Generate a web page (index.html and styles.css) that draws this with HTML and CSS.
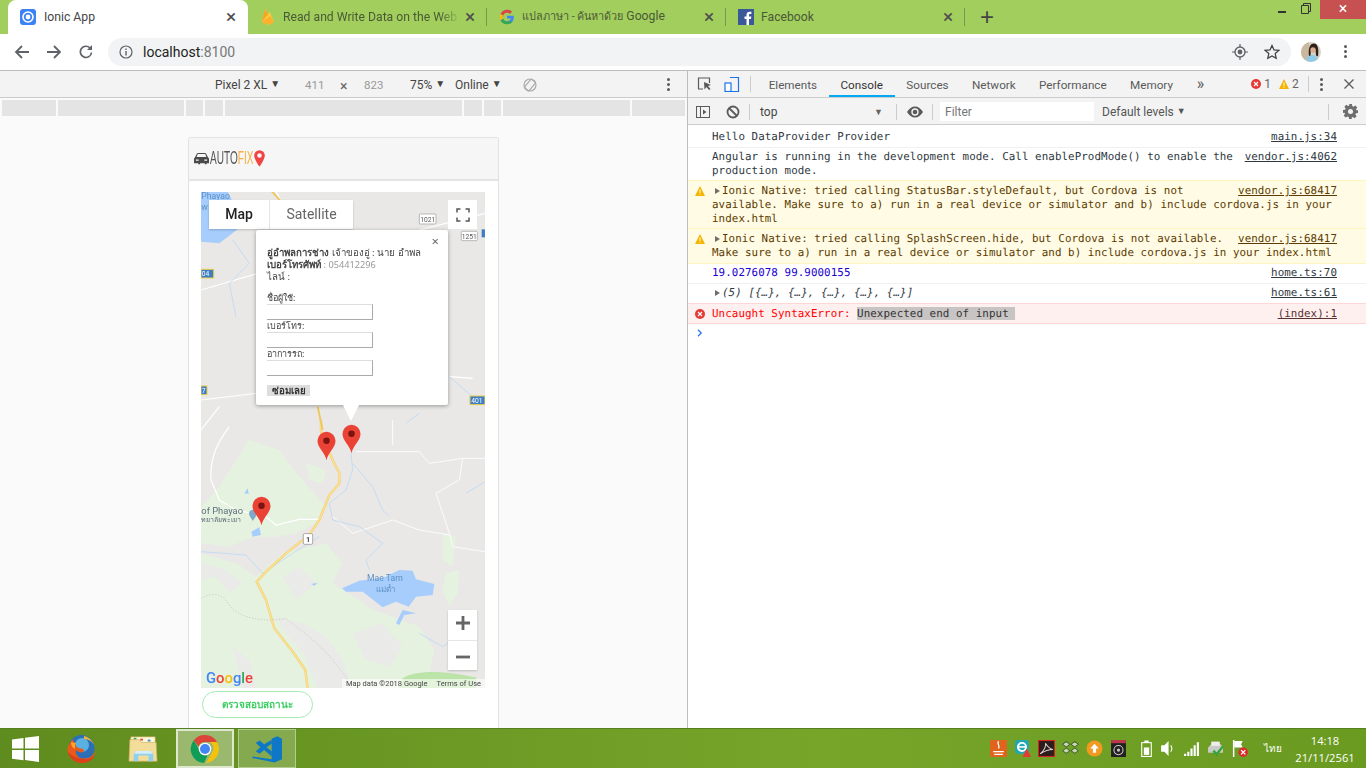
FILE: index.html
```html
<!DOCTYPE html>
<html lang="en">
<head>
  <meta charset="UTF-8">
  <title>Ionic App</title>
  <link rel="stylesheet" href="styles.css">
</head>
<body>

  <!-- chrome tabs -->
  <div class="tabstrip">
    <div class="tab active">
      <svg class="favicon" viewBox="0 0 16 16"><rect width="16" height="16" rx="3" fill="#3b82f6"/><circle cx="8" cy="8" r="5" fill="none" stroke="#fff" stroke-width="1.6"/><circle cx="8" cy="8" r="2.4" fill="#fff"/></svg>
      <span class="tab-title">Ionic App</span>
      <span class="tab-close">×</span>
    </div>
    <div class="tab">
      <svg class="favicon" viewBox="0 0 16 16"><path d="M2 13 4.800 0 8 5.500 9.800 2.800 14 13 8 16z" fill="#fcca3f"/><path d="M2 13 4.800 0 8 5.500z" fill="#f6a623"/><path d="M2 13 10.500 7 14 13 8 16z" fill="#fbb02e"/></svg>
      <span class="tab-title fade">Read and Write Data on the Web</span>
      <span class="tab-close">×</span>
    </div>
    <div class="tab">
      <svg class="favicon" viewBox="0 0 16 16"><path d="M14.6 6.7H8v2.800h3.800c-.5 1.800-2 2.900-3.800 2.900a4.400 4.400 0 0 1 0-8.800c1.100 0 2.100.4 2.900 1.100l2-2A7.200 7.200 0 0 0 8 .8a7.200 7.200 0 1 0 0 14.400c4 0 6.800-2.800 6.800-6.900 0-.6-.1-1.100-.2-1.600z" fill="#4285f4"/><path d="M1.600 4.700 4 6.500A4.400 4.400 0 0 1 8 3.600c1.100 0 2.100.4 2.900 1.100l2-2A7.200 7.200 0 0 0 1.600 4.700z" fill="#ea4335"/><path d="M1.600 11.400A7.200 7.200 0 0 0 8 15.200c1.900 0 3.600-.6 4.900-1.800l-2.300-1.800c-.7.500-1.600.8-2.600.8A4.400 4.400 0 0 1 4 9.500z" fill="#34a853"/><path d="M1.600 4.700a7.200 7.200 0 0 0 0 6.700L4 9.500a4.400 4.400 0 0 1 0-3z" fill="#fbbc05"/></svg>
      <span class="tab-title"><span class="tab-th">แปลภาษา - ค้นหาด้วย</span> Google</span>
      <span class="tab-close">×</span>
    </div>
    <div class="tab">
      <svg class="favicon" viewBox="0 0 16 16"><rect width="16" height="16" fill="#3b5998"/><path d="M11 16v-6h2l.3-2.400H11V6.100c0-.7.2-1.200 1.200-1.200h1.200V2.800c-.2 0-1-.1-1.800-.1-1.800 0-3.100 1.100-3.100 3.200v1.700h-2V10h2v6z" fill="#fff"/></svg>
      <span class="tab-title">Facebook</span>
      <span class="tab-close">×</span>
    </div>
    <span class="new-tab">+</span>
    <div class="window-btns">
      <svg class="win-btn" viewBox="0 0 22 19"><rect x="6" y="11" width="8" height="2" fill="#333"/></svg>
      <svg class="win-btn" viewBox="0 0 22 19"><path d="M7.500 5.500h7v8h-7zM9.500 5.500v-2h7v8h-2" fill="none" stroke="#333"/></svg>
      <span class="win-close">×</span>
    </div>
  </div>

  <!-- address bar -->
  <div class="toolbar">
    <svg class="nav-icon" viewBox="0 0 16 16"><path d="M15 8H2M8 2 2 8l6 6" fill="none" stroke="#5f6368" stroke-width="1.8"/></svg>
    <svg class="nav-icon" viewBox="0 0 16 16"><path d="M1 8h13M8 2l6 6-6 6" fill="none" stroke="#5f6368" stroke-width="1.8"/></svg>
    <svg class="nav-icon" viewBox="0 0 16 16"><path d="M13.500 8.500A5.600 5.600 0 1 1 12 4" fill="none" stroke="#5f6368" stroke-width="1.7"/><path d="M14 1v5H9z" fill="#5f6368"/></svg>
    <div class="omnibox">
      <svg class="omni-info" viewBox="0 0 14 14"><circle cx="7" cy="7" r="6" fill="none" stroke="#5f6368" stroke-width="1.2"/><rect x="6.300" y="6" width="1.400" height="4.500" fill="#5f6368"/><rect x="6.300" y="3.500" width="1.400" height="1.500" fill="#5f6368"/></svg>
      <span class="url">localhost<span class="url-port">:8100</span></span>
      <svg class="omni-action" viewBox="0 0 16 16"><circle cx="8" cy="8" r="5" fill="none" stroke="#5f6368" stroke-width="1.4"/><circle cx="8" cy="8" r="2.400" fill="#5f6368"/><path d="M8 0v3M8 13v3M0 8h3M13 8h3" stroke="#5f6368" stroke-width="1.2"/></svg>
      <svg class="omni-action" viewBox="0 0 16 16"><path d="m8 1.500 2 4.400 4.800.5-3.600 3.200 1 4.700L8 11.900l-4.200 2.400 1-4.700L1.200 6.400 6 5.900z" fill="none" stroke="#444" stroke-width="1.3"/></svg>
    </div>
    <svg class="avatar" viewBox="0 0 20 20"><clipPath id="av"><circle cx="10" cy="10" r="10"/></clipPath><g clip-path="url(#av)"><rect width="20" height="20" fill="#d8d2c4"/><rect width="8" height="20" fill="#c9b8a0"/><path d="M5 20c0-5 2-7 6-7s6 2 6 7z" fill="#8fcbe6"/><path d="M8 14C7 6 9 1.500 13 1.500c4 0 5 6 4 13l-2-1-.5-6H10l-.5 6z" fill="#2f2119"/><circle cx="12" cy="8" r="2.700" fill="#dcae90"/></g></svg>
    <span class="dots"><i></i><i></i><i></i></span>
  </div>

  <div class="workspace">
    <!-- device emulation side -->
    <div class="emulator">
      <div class="device-bar">
        <span class="dev-model">Pixel 2 XL <b>▼</b></span>
        <span class="dev-size">411</span>
        <span class="dev-x">×</span>
        <span class="dev-size">823</span>
        <span class="dev-zoom">75% <b>▼</b></span>
        <span class="dev-net">Online <b>▼</b></span>
        <svg class="dev-rotate" viewBox="0 0 14 14"><circle cx="7" cy="7" r="6" fill="none" stroke="#aaa" stroke-width="1.2"/><rect x="4" y="1.500" width="6" height="11" rx="1" transform="rotate(40 7 7)" fill="none" stroke="#aaa" stroke-width="1.2"/></svg>
        <span class="dots dots-dev"><i></i><i></i><i></i></span>
      </div>
      <div class="media-bar">
        <i></i><i></i><i></i><i></i><i></i><i></i><i></i><i></i><i></i>
      </div>
      <div class="viewport">
        <div class="phone">
          <div class="app-header">
            <svg class="logo-car" viewBox="0 0 16 12"><path d="M1 5 3 1C3.300.4 3.800 0 4.500 0h7c.7 0 1.200.4 1.500 1l2 4c.6.300 1 .8 1 1.500V11h-2.500v1h-2v-1h-5v1h-2v-1H0V6.500C0 5.800.4 5.300 1 5zm1.800-.5h10.400L12 1.300H4zM2 7v1.500h3V7zm9 0v1.500h3V7z" fill="#4a4a4a" fill-rule="evenodd"/></svg>
            <span class="logo-text">AUTO<span class="logo-fix">FIX</span></span>
            <svg class="logo-pin" viewBox="0 0 12 18"><path d="M6 0a5.800 5.800 0 0 0-5.800 5.800C.2 10 6 18 6 18s5.800-8 5.800-12.200A5.800 5.800 0 0 0 6 0zm0 8.300a2.500 2.500 0 1 1 0-5 2.500 2.500 0 0 1 0 5z" fill="#ef4444"/></svg>
          </div>
          <div class="app-content">
            <div class="map">
              <svg class="map-art" viewBox="0 0 284 496">
                <rect width="284" height="496" fill="#e9e8e6"/>
                <!-- lower half, drawn on a 3x grid -->
                <g transform="translate(-15 228) scale(.3333)">
                  <path d="M45 400 150 430 210 470 290 400 420 370 470 430 440 490 520 540 560 570 620 590 700 620 745 690 730 760 640 805H45z" fill="#e5f2e0"/>
                  <path d="M100 200 190 60 280 90 340 170 420 260 390 310 330 340 270 350 200 350 130 380 45 370V260z" fill="#e5f2e0"/>
                  <path d="M360 130 420 150 410 190 370 180zM770 340 810 350 800 440 770 420zM780 460 820 450 815 520 790 560 770 510z" fill="#e5f2e0"/>
                  <path d="M45 430 110 445 170 490 130 520 90 470 45 480zM290 470 340 440 390 490 330 540zM270 590 350 610 420 650 470 720 500 805H395L350 700 300 640zM500 640 590 610 650 680 610 740 540 720zM140 680 190 720 210 805H170z" fill="#eaeae8"/>
                  <path d="M650 775C690 750 760 750 870 772V805H640z" fill="#bce3a8"/>
                  <path d="M75 180C70 110 100 60 130 20M75 180 100 240 150 270 240 290 270 315 340 298H400" fill="none" stroke="#fff" stroke-width="3.5"/>
                  <path d="M510 95H700L730 130 830 115H897M620 0V75M830 115 820 180 750 220 790 340 800 380 897 395M440 290 500 340 620 300 700 330 790 345" fill="none" stroke="#fff" stroke-width="2.5"/>
                  <path d="M495 100 500 150 480 210 430 250 440 300 520 320 590 370 540 420 550 450M500 130 560 200 590 270 610 290M45 395 180 405 230 460 320 400 400 350M700 640 770 680 800 660M840 220 897 185" fill="none" stroke="#bdd8f7" stroke-width="2.5"/>
                  <path d="M45 535C80 515 110 520 130 555 150 590 230 610 300 595 340 630 380 650 440 720 470 760 490 780 495 805" fill="none" stroke="#aeb3a4" stroke-width="1.5" stroke-dasharray="4 5"/>
                  <path d="M468 505 520 482 590 474 640 450 680 452 690 478 745 492 740 525 690 530 668 560 630 545 590 562 562 540 530 515 480 515z" fill="#a6cdfb"/>
                  <path d="M630 610 650 570 690 580 655 585 640 615zM196 335 220 322 225 345 200 350zM175 220 185 205 188 222zM375 492 395 488 385 497z" fill="#a6cdfb"/>
                  <path d="M405 0V35L440 120 460 160V190L430 225 400 300 370 345 300 400 240 455 212 485 240 540 265 625 320 695 358 750 365 805" fill="none" stroke="#f0c860" stroke-width="7"/>
                  <path d="M405 0V35L440 120 460 160V190L430 225 400 300 370 345 300 400 240 455 212 485 240 540 265 625 320 695 358 750 365 805" fill="none" stroke="#fde293" stroke-width="4.5"/>
                  <rect x="352" y="341" width="28" height="32" rx="4" fill="#fff" stroke="#888" stroke-width="2"/>
                  <text x="366" y="365" class="map-num-big" text-anchor="middle">1</text>
                  <text x="46" y="282" class="map-label">of Phayao</text>
                  <text x="46" y="306" class="map-label-th">ทยาลัยพะเยา</text>
                  <text x="543" y="483" class="map-water">Mae Tam</text>
                  <text x="570" y="515" class="map-water-th">แม่ต๋ำ</text>
                  <path d="M190 275c8-8 22-8 22 6 0 8-8 14-12 22-4-10-14-18-10-28z" fill="#7fa8c9"/>
                </g>
                <!-- upper half -->
                <g transform="translate(-15 -62) scale(.3333)">
                  <path d="M45 185H125L150 235 115 260 165 290 100 340 45 335z" fill="#a6cdfb"/>
                  <path d="M45 480 320 400M45 810 380 770M700 300 897 250M790 740 860 745M100 830 45 900M270 185 300 240" fill="none" stroke="#fff" stroke-width="3.5"/>
                  <path d="M140 330 190 400 130 460 150 560M660 880 700 850M790 740 860 800" fill="none" stroke="#bdd8f7" stroke-width="2.5"/>
                  <path d="M258 185 283 212" stroke="#f0c860" stroke-width="6"/>
                  <path d="M395 830 410 900" stroke="#f0c860" stroke-width="6"/>
                  <text x="46" y="208" class="map-water">Phayao</text>
                  <text x="46" y="240" class="map-water">w</text>
                  <rect x="700" y="252" width="50" height="30" rx="3" fill="#fff" stroke="#999" stroke-width="2"/>
                  <text x="725" y="275" class="map-num" text-anchor="middle">1021</text>
                  <rect x="826" y="304" width="48" height="28" rx="3" fill="#fff" stroke="#999" stroke-width="2"/>
                  <text x="850" y="326" class="map-num" text-anchor="middle">1251</text>
                  <rect x="45" y="418" width="38" height="26" fill="#3f7fc1" stroke="#e8cf4e" stroke-width="3"/>
                  <text x="47" y="438" class="map-shield">04</text>
                  <rect x="45" y="768" width="18" height="26" fill="#3f7fc1" stroke="#e8cf4e" stroke-width="3"/>
                  <text x="47" y="788" class="map-shield">7</text>
                  <rect x="852" y="798" width="45" height="26" fill="#3f7fc1" stroke="#e8cf4e" stroke-width="3"/>
                  <text x="856" y="818" class="map-shield">401</text>
                  <rect x="887" y="298" width="10" height="24" fill="#3f7fc1"/>
                </g>
              </svg>

              <svg class="marker marker-a" viewBox="0 0 20 30"><path d="M10 30C8.500 22 .5 17 .5 9.500a9.500 9.500 0 0 1 19 0C19.500 17 11.500 22 10 30z" fill="#ea4335"/><circle cx="10" cy="9.500" r="3.400" fill="#7b1410"/></svg>
              <svg class="marker marker-b" viewBox="0 0 20 30"><path d="M10 30C8.500 22 .5 17 .5 9.500a9.500 9.500 0 0 1 19 0C19.500 17 11.500 22 10 30z" fill="#ea4335"/><circle cx="10" cy="9.500" r="3.400" fill="#7b1410"/></svg>
              <svg class="marker marker-c" viewBox="0 0 20 30"><path d="M10 30C8.500 22 .5 17 .5 9.500a9.500 9.500 0 0 1 19 0C19.500 17 11.500 22 10 30z" fill="#ea4335"/><circle cx="10" cy="9.500" r="3.400" fill="#7b1410"/></svg>

              <div class="map-type">
                <span class="map-type-btn current">Map</span>
                <span class="map-type-btn">Satellite</span>
              </div>
              <div class="map-full">
                <svg viewBox="0 0 14 14"><path d="M1 4.500V1h3.500M9.500 1H13v3.500M13 9.500V13H9.500M4.500 13H1V9.500" fill="none" stroke="#555" stroke-width="1.5"/></svg>
              </div>
              <div class="map-zoom">
                <span class="zoom-btn">
                  <svg viewBox="0 0 14 14"><path d="M7 0v14M0 7h14" stroke="#666" stroke-width="2.8"/></svg>
                </span>
                <span class="zoom-btn">
                  <svg viewBox="0 0 14 14"><path d="M0 7h14" stroke="#666" stroke-width="2.8"/></svg>
                </span>
              </div>
              <div class="google-logo"><span class="g-b">G</span><span class="g-r">o</span><span class="g-y">o</span><span class="g-b">g</span><span class="g-g">l</span><span class="g-r">e</span></div>
              <div class="map-credits"><span>Map data ©2018 Google</span><span>Terms of Use</span></div>

              <div class="popup">
                <span class="popup-close">×</span>
                <div class="popup-line"><b>อู่อำพลการช่าง</b> เจ้าของอู่ : นาย อำพล</div>
                <div class="popup-line"><b>เบอร์โทรศัพท์</b> <span class="popup-phone">: 054412296</span></div>
                <div class="popup-line">ไลน์ :</div>
                <label class="popup-label first">ชื่อผู้ใช้:</label>
                <input class="popup-input" type="text">
                <label class="popup-label">เบอร์โทร:</label>
                <input class="popup-input" type="text">
                <label class="popup-label">อาการรถ:</label>
                <input class="popup-input" type="text">
                <button class="popup-btn">ซ่อมเลย</button>
                <span class="popup-tail"></span>
              </div>
            </div>
            <button class="status-btn">ตรวจสอบสถานะ</button>
          </div>
        </div>
      </div>
    </div>

    <!-- devtools -->
    <div class="devtools">
      <div class="dt-tabs">
        <svg class="dt-icon" viewBox="0 0 16 16"><path d="M6 13H1.500V2h11v5" fill="none" stroke="#5a5a5a" stroke-width="1.2"/><path d="m7 6 7 3-3 1 2.500 3-1.500 1-2.500-3-2 2.500z" fill="#5a5a5a"/></svg>
        <svg class="dt-icon" viewBox="0 0 16 16"><path d="M6 1.500h8.500v14H4V9" fill="none" stroke="#1a73e8" stroke-width="1.2"/><rect x="1" y="7" width="6" height="8.500" fill="#fff" stroke="#1a73e8" stroke-width="1.2"/></svg>
        <span class="dt-sep"></span>
        <div class="dt-tablist">
          <span class="dt-tab">Elements</span>
          <span class="dt-tab current">Console</span>
          <span class="dt-tab">Sources</span>
          <span class="dt-tab">Network</span>
          <span class="dt-tab">Performance</span>
          <span class="dt-tab">Memory</span>
        </div>
        <span class="dt-more">»</span>
        <span class="dt-counts">
          <svg class="count-icon" viewBox="0 0 10 10"><circle cx="5" cy="5" r="5" fill="#e53935"/><path d="m3 3 4 4M7 3 3 7" stroke="#fff" stroke-width="1.2"/></svg>1
          <svg class="count-icon warn" viewBox="0 0 10 10"><path d="M5 0 10 10H0z" fill="#f4b400"/><rect x="4.500" y="3.500" width="1" height="3.500" fill="#fff"/><rect x="4.500" y="7.800" width="1" height="1" fill="#fff"/></svg>2
        </span>
        <span class="dt-sep"></span>
        <span class="dots dots-dt"><i></i><i></i><i></i></span>
        <svg class="dt-close" viewBox="0 0 10 10"><path d="m.5.5 9 9M9.500.5l-9 9" stroke="#5a5a5a" stroke-width="1.3"/></svg>
      </div>

      <div class="dt-filter">
        <svg class="dt-icon small" viewBox="0 0 14 14"><rect x=".5" y="1.500" width="13" height="11" fill="none" stroke="#5a5a5a"/><rect x="4" y="1.500" width="1" height="11" fill="#5a5a5a"/><path d="m7 4.500 3.500 2.500L7 9.500z" fill="#5a5a5a"/></svg>
        <svg class="dt-icon small" viewBox="0 0 14 14"><circle cx="7" cy="7" r="5.500" fill="none" stroke="#5a5a5a" stroke-width="1.8"/><path d="m3 3 8 8" stroke="#5a5a5a" stroke-width="1.8"/></svg>
        <span class="dt-sep"></span>
        <span class="context">top<b>▼</b></span>
        <span class="dt-sep"></span>
        <svg class="dt-eye" viewBox="0 0 16 12"><path d="M0 6c2-3.500 5-5.500 8-5.500S14 2.500 16 6c-2 3.500-5 5.500-8 5.500S2 9.500 0 6z" fill="#5a5a5a"/><circle cx="8" cy="6" r="3.700" fill="#f3f3f3"/><circle cx="8" cy="6" r="2.300" fill="#5a5a5a"/></svg>
        <span class="dt-sep"></span>
        <input class="filter-input" type="text" placeholder="Filter">
        <span class="levels">Default levels <b>▼</b></span>
        <span class="dt-sep"></span>
        <svg class="dt-gear" viewBox="0 0 16 16"><path d="M6.500 0h3l.4 2.200 1.300.6L13.100 1.500l2.100 2.100-1.300 1.900.6 1.300L16 6.500v3l-2.200.4-.6 1.300 1.300 1.900-2.100 2.100-1.900-1.300-1.300.6L9.500 16h-3l-.4-2.200-1.300-.6-1.900 1.300-2.100-2.100 1.300-1.900-.6-1.300L0 9.500v-3l2.200-.4.6-1.300-1.300-1.900 2.100-2.100 1.900 1.300 1.300-.6zM8 5.300a2.700 2.700 0 1 0 0 5.400 2.700 2.700 0 0 0 0-5.400z" fill="#6e6e6e"/></svg>
      </div>

      <div class="console">
        <div class="msg">
          <a class="msg-src">main.js:34</a><span>Hello DataProvider Provider</span>
        </div>
        <div class="msg">
          <a class="msg-src">vendor.js:4062</a><span class="line">Angular is running in the development mode. Call enableProdMode() to enable the</span>
          <span class="line">production mode.</span>
        </div>
        <div class="msg warn">
          <svg class="msg-icon" viewBox="0 0 10 10"><path d="M5 0 10 10H0z" fill="#f4b400"/><rect x="4.500" y="3.500" width="1" height="3.500" fill="#fff"/><rect x="4.500" y="7.800" width="1" height="1" fill="#fff"/></svg>
          <a class="msg-src">vendor.js:68417</a><span class="line"><span class="caret"></span>Ionic Native: tried calling StatusBar.styleDefault, but Cordova is not</span>
          <span class="line">available. Make sure to a) run in a real device or simulator and b) include cordova.js in your</span>
          <span class="line">index.html</span>
        </div>
        <div class="msg warn">
          <svg class="msg-icon" viewBox="0 0 10 10"><path d="M5 0 10 10H0z" fill="#f4b400"/><rect x="4.500" y="3.500" width="1" height="3.500" fill="#fff"/><rect x="4.500" y="7.800" width="1" height="1" fill="#fff"/></svg>
          <a class="msg-src">vendor.js:68417</a><span class="line"><span class="caret"></span>Ionic Native: tried calling SplashScreen.hide, but Cordova is not available.</span>
          <span class="line">Make sure to a) run in a real device or simulator and b) include cordova.js in your index.html</span>
        </div>
        <div class="msg number">
          <a class="msg-src">home.ts:70</a><span>19.0276078 99.9000155</span>
        </div>
        <div class="msg">
          <a class="msg-src">home.ts:61</a><span class="caret"></span><i class="obj">(5) [{…}, {…}, {…}, {…}, {…}]</i>
        </div>
        <div class="msg error">
          <svg class="msg-icon" viewBox="0 0 10 10"><circle cx="5" cy="5" r="5" fill="#e53935"/><path d="m3 3 4 4M7 3 3 7" stroke="#fff" stroke-width="1.2"/></svg>
          <a class="msg-src">(index):1</a><span>Uncaught SyntaxError: </span><span class="err-mark">Unexpected end of input</span>
        </div>
        <div class="prompt">
          <svg viewBox="0 0 6 8"><path d="m1 .8 3.200 3.200L1 7.200" fill="none" stroke="#367cf1" stroke-width="1.4"/></svg>
        </div>
      </div>
    </div>
  </div>

  <!-- windows taskbar -->
  <div class="taskbar">
    <svg class="start" viewBox="0 0 27 26"><path d="M0 3.600 11.500 2v10.500H0zM13 1.800 27 0v12.500H13zM0 14h11.500v10.300L0 22.700zM13 14h14v12l-14-1.900z" fill="#fff"/></svg>
    <span class="task-item">
      <svg viewBox="0 0 30 30"><circle cx="15.500" cy="14" r="13" fill="#2c6fb7"/><circle cx="16" cy="11" r="7" fill="#5ab0e0"/><path d="M7 5C3 9 1 13 1.500 17 3 25 10 29 16 29c8 0 13-6 13.500-12.500C28 21 24 25 17 24.500 12 24 9 20 10 16c2 2 5 3 7 2 2-1 1-3-2-3.500C11 14 9 12 10 9 8 9 7 7 7 5z" fill="#e8591c"/><path d="M1.500 17C3 25 10 29 16 29c6 0 11-3 13-8-3 3-7 5-12 4C10 24 5 22 1.500 17z" fill="#d8411a"/><path d="M5 8c0 4 2 6 4 7 0-2 0-5 1-6-2 0-4-1-5-1z" fill="#f9a825"/><path d="M18 2c5 1 9 5 11 10-2-4-6-7-11-7z" fill="#f2b632"/></svg>
    </span>
    <span class="task-item">
      <svg viewBox="0 0 32 28"><path d="M3 1h26v10H3z" fill="#fff7d6" stroke="#c8a850" stroke-width=".6"/><rect x="6" y="2" width="3" height="2" fill="#3fae4a"/><rect x="13" y="3" width="3" height="2" fill="#d9534f"/><rect x="21" y="4" width="3" height="2" fill="#3f8fd9"/><path d="M2 4h10l2 3h16l1 20H1z" fill="#f3dd9b" stroke="#cfae60" stroke-width=".7"/><path d="M6 27v-7l2-4h17l2 4v7h-5v-6H11v6z" fill="#8fd0ee"/><path d="M8 16h17l1 3H7z" fill="#d4effa"/></svg>
    </span>
    <span class="task-item open active">
      <svg viewBox="0 0 30 30"><path d="M15 1a14 14 0 0 1 12.100 7H15a7 7 0 0 0-6.500 4.400L3.800 6.300A14 14 0 0 1 15 1z" fill="#db4437"/><path d="M27.100 8A14 14 0 0 1 16 29l6-10.500A7 7 0 0 0 20 8z" fill="#f4c20d"/><path d="M3.800 6.300 9.500 16a7 7 0 0 0 8 5.500L14 29A14 14 0 0 1 3.800 6.300z" fill="#0f9d58"/><circle cx="15" cy="15" r="6.300" fill="#fff"/><circle cx="15" cy="15" r="5" fill="#4285f4"/></svg>
    </span>
    <span class="task-item open">
      <svg viewBox="0 0 32 30"><path d="M21 4 27 1.500 32 4v22l-8 3.500L0 24.500l1-1.500 20 3z" fill="#0e77c6"/><path d="M21 5v18l-8-7-5 4-4-2.500L9 13 4 8.500 8 6l5 4zM21 9.500 15.500 13l5.500 4.500z" fill="#0e77c6" fill-rule="evenodd"/></svg>
    </span>
    <div class="tray">
      <svg class="tray-icon" viewBox="0 0 16 16"><rect width="16" height="16" fill="#e0641e"/><path d="M3 11h10M4 13.500h8" stroke="#fff" stroke-width="1.2"/><path d="M8 1C6 4 10 5 8 8" fill="none" stroke="#fff" stroke-width="1.2"/></svg>
      <svg class="tray-icon" viewBox="0 0 16 16"><rect x="1" y="0" width="13" height="13" rx="3" fill="#1fa7b8"/><circle cx="7.500" cy="6.500" r="3.800" fill="none" stroke="#fff" stroke-width="1.8"/><path d="M4 6.500h7" stroke="#fff" stroke-width="1.5"/><path d="m12 8 4 8H8z" fill="#e53935"/></svg>
      <svg class="tray-icon" viewBox="0 0 16 16"><rect x=".5" y=".5" width="15" height="15" fill="#2d1c1c" stroke="#d92020"/><path d="M2 13C6 10 8 5 7 3c2 3 3 5 7 6-4 0-7 1-12 4z" fill="none" stroke="#e0d8d8"/></svg>
      <svg class="tray-icon" viewBox="0 0 16 14"><path d="m4 0 4 3-4 3-4-3zM12 0l4 3-4 3-4-3zM4 6l4 3-4 3-4-3zM12 6l4 3-4 3-4-3z" fill="#3f5a2b"/><path d="m4 1 2.800 2L4 5 1.200 3zM12 1l2.800 2L12 5 9.200 3zM4 7l2.800 2L4 11 1.200 9zM12 7l2.800 2-2.800 2-2.800-2z" fill="#c9d8b4"/></svg>
      <svg class="tray-icon" viewBox="0 0 16 16"><circle cx="8" cy="8" r="7.500" fill="#f29a1f"/><path d="M8 3.500 12 8H9.500v4h-3V8H4z" fill="#fff"/></svg>
      <svg class="tray-icon" viewBox="0 0 16 16"><rect x="1" width="14" height="16" fill="#231f20"/><rect x="1" width="14" height="3" fill="#b83a4a"/><circle cx="8" cy="9.500" r="4.300" fill="none" stroke="#ccc"/><circle cx="8" cy="9.500" r="1.500" fill="#ccc"/></svg>
      <svg class="tray-icon battery" viewBox="0 0 16 16"><rect x="3.500" y="2.500" width="9" height="13" fill="none" stroke="#fff"/><rect x="6" y="0.500" width="4" height="2" fill="#fff"/><rect x="5.500" y="7" width="5" height="7" fill="#fff"/></svg>
      <svg class="tray-icon" viewBox="0 0 16 16"><path d="M2 5h3l4-4v14l-4-4H2z" fill="#fff"/><path d="M11 5c1.500 2 1.500 4 0 6" fill="none" stroke="#fff"/></svg>
      <svg class="tray-icon" viewBox="0 0 16 16"><path d="M1 13h2v2H1zM4 11h2v4H4zM7 8h2v7H7zM10 5h2v10h-2zM13 2h2v13h-2z" fill="#fff"/></svg>
      <svg class="tray-icon" viewBox="0 0 16 16"><path d="M1 7 4 4h9l2 3v5H1z" fill="#c8ccc8"/><rect x="4" y="1.500" width="8" height="4" fill="#eee"/><path d="m6 10 3 3.500L15 6" fill="none" stroke="#37a33c" stroke-width="2.2"/></svg>
      <svg class="tray-icon" viewBox="0 0 16 16"><path d="M2.500 0v16" stroke="#fff" stroke-width="1.4"/><path d="M3 1h8l-1.500 3L11 7H3z" fill="#fff"/><circle cx="11.500" cy="11.500" r="4.500" fill="#d92d2d"/><path d="m9.500 9.500 4 4M13.500 9.500l-4 4" stroke="#fff" stroke-width="1.2"/></svg>
      <span class="tray-lang">ไทย</span>
      <div class="clock"><span>14:18</span><span>21/11/2561</span></div>
    </div>
  </div>

</body>
</html>
```

FILE: styles.css
```css
* {
  box-sizing: border-box;
}

html, body {
  margin: 0;
  height: 768px;
  overflow: hidden;
}

body {
  display: flex;
  flex-direction: column;
  font-family: "Roboto", "Noto Sans", sans-serif;
  font-size: 12px;
  color: #333;
  background: #fff;
}

/* chrome tabs */
.tabstrip {
  display: flex;
  height: 34px;
  padding-left: 8px;
  background: #a2ce5e;
}

.tab {
  position: relative;
  display: flex;
  align-items: center;
  width: 239px;
  padding: 0 8px 1px 12px;
  color: #4a5a35;
}

.tab::after {
  content: "";
  position: absolute;
  right: 0;
  top: 8px;
  height: 18px;
  border-right: 1px solid #79994a;
}

.tab.active {
  width: 240px;
  background: #fff;
  border-radius: 8px 8px 0 0;
  color: #444;
}

.tab.active::after {
  display: none;
}

.favicon {
  width: 16px;
  height: 16px;
  flex: none;
  margin-right: 7px;
}

.tab.active .favicon {
  margin-right: 8px;
}

.tab-title {
  flex: 1;
  white-space: nowrap;
  font-size: 12.2px;
}

.tab-th {
  font-size: 10.8px;
}

.tab-title.fade {
  -webkit-mask-image: linear-gradient(to right, #000 88%, transparent);
  mask-image: linear-gradient(to right, #000 88%, transparent);
}

.tab-close {
  width: 18px;
  text-align: center;
  font-size: 19px;
  line-height: 18px;
  color: #4d4d4d;
}

.new-tab {
  width: 44px;
  text-align: center;
  font-family: "Liberation Sans", sans-serif;
  font-size: 24px;
  line-height: 33px;
  color: #444;
}

.window-btns {
  display: flex;
  margin-left: auto;
  align-items: flex-start;
}

.win-btn {
  width: 22px;
  height: 19px;
}

.win-close {
  width: 46px;
  height: 19px;
  margin-left: 4px;
  background: #c75050;
  color: #fff;
  text-align: center;
  font-size: 16px;
  line-height: 18px;
}

/* address bar */
.toolbar {
  display: flex;
  align-items: center;
  height: 37px;
  padding: 0 0 1px 14px;
  border-bottom: 1px solid #bdbdbd;
  background: #fff;
}

.nav-icon {
  width: 16px;
  height: 16px;
  margin-right: 16px;
}

.omnibox {
  display: flex;
  align-items: center;
  flex: 1;
  height: 28px;
  margin-left: -2px;
  padding: 0 11px 0 11px;
  border-radius: 14px;
  background: #f1f3f4;
}

.omni-info {
  width: 14px;
  height: 14px;
  margin-right: 10px;
}

.url {
  flex: 1;
  font-size: 14px;
  color: #222;
}

.url-port {
  color: #777;
}

.omni-action {
  width: 16px;
  height: 16px;
  margin-left: 16px;
}

.avatar {
  width: 20px;
  height: 20px;
  margin: 0 23px 0 10px;
}

.dots {
  display: flex;
  flex-direction: column;
  gap: 2px;
  margin-right: 19px;
}

.dots i {
  width: 3px;
  height: 3px;
  border-radius: 50%;
  background: #5a5a5a;
}

/* emulator side */
.workspace {
  display: flex;
  height: 657px;
}

.emulator {
  display: flex;
  flex-direction: column;
  width: 688px;
  border-right: 1px solid #bdbdbd;
  background: #fafafa;
  overflow: hidden;
}

.device-bar {
  display: flex;
  align-items: center;
  flex: none;
  height: 27px;
  padding: 1px 0 0 215px;
  border-bottom: 1px solid #ccc;
  background: #f3f3f3;
  color: #444;
}

.device-bar b {
  font-size: 10px;
  font-weight: normal;
  vertical-align: 2px;
}

.dev-model {
  width: 90px;
}

.dev-size {
  width: 20px;
  font-size: 11.5px;
  color: #999;
}

.dev-x {
  width: 39px;
  padding: 2px 0 0 15px;
  font-size: 14px;
  color: #666;
}

.dev-x + .dev-size {
  margin-right: 26px;
}

.dev-zoom {
  width: 45px;
}

.dev-net {
  width: 55px;
}

.dev-rotate {
  width: 14px;
  height: 14px;
  margin-left: 13px;
}

.dots-dev {
  margin-left: auto;
  margin-right: 17px;
}

.media-bar {
  display: grid;
  flex: none;
  grid-template-columns: 54px 126px 17px 18px 237px 18px 17px 127px 53px;
  gap: 2px;
  height: 16px;
  margin: 2px 0 0 2px;
}

.media-bar i {
  background: #e4e4e4;
}

.viewport {
  flex: 1;
  padding: 21px 0 0 188px;
}

.phone {
  width: 311px;
  height: 640px;
  border: 1px solid #e2e2e2;
  border-radius: 2px 2px 0 0;
  background: #fff;
  filter: blur(.3px);
}

.app-header {
  display: flex;
  align-items: center;
  height: 43px;
  padding-left: 5px;
  border-bottom: 2px solid #e4e4e4;
  background: #f6f6f6;
}

.logo-car {
  width: 15px;
  height: 13px;
  margin-right: 1px;
}

.logo-text {
  display: inline-block;
  width: 44px;
  font-family: "Liberation Sans", sans-serif;
  font-size: 18px;
  white-space: nowrap;
  color: #555;
  transform: scaleX(.56);
  transform-origin: left center;
}

.logo-fix {
  color: #f5b041;
}

.logo-pin {
  width: 11px;
  height: 17px;
}

.app-content {
  padding: 11px 0 0 12px;
}

/* map */
.map {
  position: relative;
  width: 284px;
  height: 496px;
  overflow: hidden;
}

.map-art {
  display: block;
  width: 284px;
  height: 496px;
}

.map-label {
  font: 28px "Roboto", sans-serif;
  fill: #5f6f7a;
}

.map-label-th {
  font: 21px "Noto Sans", sans-serif;
  fill: #5f6f7a;
}

.map-water {
  font: 26px "Roboto", sans-serif;
  fill: #5d91c7;
}

.map-water-th {
  font: 24px "Noto Sans", sans-serif;
  fill: #5d91c7;
}

.map-num {
  font: 20px "Roboto", sans-serif;
  fill: #555;
}

.map-num-big {
  font: bold 22px "Roboto", sans-serif;
  fill: #444;
}

.map-shield {
  font: 20px "Roboto", sans-serif;
  fill: #fff;
}

.marker {
  position: absolute;
  width: 19px;
  height: 30px;
}

.marker-a {
  left: 116px;
  top: 239px;
}

.marker-b {
  left: 141px;
  top: 232px;
}

.marker-c {
  left: 51px;
  top: 304px;
}

.map-type {
  position: absolute;
  left: 8px;
  top: 8px;
  display: flex;
  height: 29px;
  background: #fff;
  box-shadow: 0 1px 2px rgba(0,0,0,.2);
  font-size: 14px;
  line-height: 29px;
}

.map-type-btn {
  width: 83px;
  text-align: center;
  color: #666;
}

.map-type-btn.current {
  width: 61px;
  border-right: 1px solid #e6e6e6;
  color: #222;
  font-weight: 500;
}

.map-full {
  position: absolute;
  right: 8px;
  top: 8px;
  display: flex;
  align-items: center;
  justify-content: center;
  width: 29px;
  height: 29px;
  background: #fff;
}

.map-full svg {
  width: 14px;
  height: 14px;
}

.map-zoom {
  position: absolute;
  right: 8px;
  bottom: 18px;
  display: flex;
  flex-direction: column;
  width: 29px;
  height: 60px;
  background: #fff;
  box-shadow: 0 1px 2px rgba(0,0,0,.2);
}

.zoom-btn {
  display: flex;
  align-items: center;
  justify-content: center;
  flex: 1;
  padding-bottom: 4px;
}

.zoom-btn + .zoom-btn {
  padding: 4px 0 0;
  border-top: 1px solid #e6e6e6;
}

.zoom-btn svg {
  width: 14px;
  height: 14px;
}

.google-logo {
  position: absolute;
  left: 5px;
  bottom: 1px;
  font: 500 14.8px "Roboto", sans-serif;
}

.g-b { color: #4285f4; }
.g-r { color: #ea4335; }
.g-y { color: #fbbc05; }
.g-g { color: #34a853; }

.map-credits {
  position: absolute;
  right: 0;
  bottom: 0;
  display: flex;
  gap: 9px;
  height: 9px;
  padding: 0 4px;
  background: rgba(255,255,255,.6);
  font-size: 7.5px;
  line-height: 9px;
  color: #444;
  white-space: nowrap;
}

/* popup */
.popup {
  position: absolute;
  left: 55px;
  top: 38px;
  width: 192px;
  height: 175px;
  padding: 17px 11px 0;
  border-radius: 2px;
  background: #fff;
  box-shadow: 0 1px 4px rgba(0,0,0,.35);
  font-family: "Noto Sans", "DejaVu Sans", sans-serif;
  font-size: 9.7px;
  line-height: 12px;
  color: #444;
}

.popup-close {
  position: absolute;
  right: 9px;
  top: 5px;
  font-size: 13px;
  color: #666;
}

.popup-line {
  white-space: nowrap;
}

.popup-phone {
  font-size: 9.2px;
  color: #999;
}

.popup-label {
  display: block;
  height: 12px;
  font-size: 9px;
}

.popup-label.first {
  margin-top: 9px;
}

.popup-input {
  display: block;
  width: 106px;
  height: 16px;
  padding: 0;
  border: 0;
  border-right: 1px solid #aaa;
  border-bottom: 1px solid #aaa;
  border-top: 1px solid #ddd;
  background: #fff;
}

.popup-btn {
  display: block;
  width: 43px;
  height: 11px;
  margin-top: 9px;
  padding: 0;
  border: 0;
  background: #ddd;
  font: inherit;
  font-weight: 600;
  line-height: 11px;
  color: #333;
}

.popup-tail {
  position: absolute;
  left: 87px;
  top: 100%;
  border-left: 8px solid transparent;
  border-right: 8px solid transparent;
  border-top: 16px solid #fff;
}

.status-btn {
  display: block;
  width: 111px;
  height: 27px;
  margin: 3px 0 0 1px;
  padding: 0;
  border: 1px solid #a5eab0;
  border-radius: 14px;
  background: #fff;
  font-family: "Noto Sans", "DejaVu Sans", sans-serif;
  font-size: 10px;
  font-weight: bold;
  color: #3dcf64;
}

/* devtools */
.devtools {
  flex: 1;
  display: flex;
  flex-direction: column;
  min-width: 0;
}

.dt-tabs, .dt-filter {
  display: flex;
  align-items: center;
  flex: none;
  height: 27px;
  padding-left: 9px;
  border-bottom: 1px solid #ccc;
  background: #f3f3f3;
}

.dt-icon {
  width: 16px;
  height: 16px;
  margin-right: 11px;
}

.dt-icon.small {
  width: 14px;
  height: 14px;
  margin-right: 16px;
}

.dt-icon.small + .dt-icon.small {
  margin-right: 10px;
}

.dt-sep {
  width: 1px;
  height: 16px;
  margin-left: -1px;
  background: #ccc;
}

.dt-tablist {
  display: flex;
  height: 26px;
  margin-left: 6px;
}

.dt-tab {
  padding: 0 11.7px;
  line-height: 28px;
  font-size: 11.7px;
  color: #5a5a5a;
}

.dt-tab.current {
  border-bottom: 2px solid #03a9f4;
  color: #333;
}

.dt-more {
  margin-left: 12px;
  font-size: 16px;
  color: #555;
  line-height: 22px;
}

.dt-counts {
  display: flex;
  align-items: center;
  margin-left: 47px;
  margin-right: 10px;
  color: #666;
}

.count-icon {
  width: 10px;
  height: 10px;
  margin-right: 3px;
}

.count-icon.warn {
  margin-left: 8px;
}

.dots-dt {
  margin-left: 11px;
  margin-right: 21px;
}

.dt-close {
  width: 10px;
  height: 10px;
}

.dt-filter {
  padding: 1px 0 0 8px;
}

.context {
  display: flex;
  justify-content: space-between;
  align-items: center;
  width: 147px;
  padding: 0 14px 0 10px;
  font-size: 12px;
  color: #444;
}

.context b {
  font-size: 9px;
  font-weight: normal;
  color: #666;
}

.dt-eye {
  width: 16px;
  height: 12px;
  margin: 0 10px;
}

.filter-input {
  width: 154px;
  height: 19px;
  margin-left: 7px;
  padding: 1px 5px 0;
  border: 0;
  background: #fff;
  font-family: "Roboto", sans-serif;
  font-size: 12px;
}

.levels {
  width: 227px;
  margin-left: 8px;
  font-size: 12px;
  color: #555;
}

.levels b {
  font-size: 9px;
  font-weight: normal;
  vertical-align: 2px;
}

.dt-gear {
  width: 15px;
  height: 15px;
  margin-left: 14px;
}

/* console rows */
.console {
  flex: 1;
  padding-top: 2px;
  background: #fff;
  font-family: "DejaVu Sans Mono", monospace;
  font-size: 10.83px;
  letter-spacing: .075px;
  line-height: 14px;
  color: #303942;
  text-rendering: geometricPrecision;
}

.msg {
  position: relative;
  padding: 3px 29px 3px 24px;
  box-shadow: 0 1px 0 #f0f0f0;
}

.line {
  display: block;
  white-space: nowrap;
}

.msg-src {
  float: right;
  margin-left: 12px;
  text-decoration: underline;
  color: #303942;
}

.msg-icon {
  position: absolute;
  left: 7px;
  top: 5px;
  width: 10px;
  height: 10px;
}

.caret {
  display: inline-block;
  margin: 0 2px 0 3px;
  border-left: 5px solid #6e6e6e;
  border-top: 3.5px solid transparent;
  border-bottom: 3.5px solid transparent;
}

.msg.warn {
  background: #fffbe5;
  color: #5c3b00;
  box-shadow: 0 1px 0 #fff5c2, 0 -1px 0 #fff5c2;
}

.msg.number {
  color: #1c00cf;
}

.msg.warn .msg-src {
  color: #5c3b00;
}

.obj {
  font-style: italic;
}

.msg.error {
  margin-top: 1px;
  padding-bottom: 2px;
  background: #fff0f0;
  color: #f00;
  box-shadow: 0 1px 0 #ffd6d6, 0 -1px 0 #ffd6d6;
}

.msg.error .msg-src {
  color: #5a3030;
}

.err-mark {
  padding-right: 6px;
  background: #c8c4c4;
  color: #333;
}

.prompt {
  padding: 6px 0 0 9px;
}

.prompt svg {
  display: block;
  width: 6px;
  height: 8px;
}

/* taskbar */
.taskbar {
  display: flex;
  align-items: center;
  height: 40px;
  padding-left: 12px;
  border-top: 1px solid #55801f;
  background: linear-gradient(to right, #5f8c1e, #76a52a 60%, #6a9a20);
}

.start {
  width: 27px;
  height: 26px;
  margin-right: 13px;
}

.task-item {
  display: flex;
  align-items: center;
  justify-content: center;
  width: 58px;
  height: 39px;
  margin-right: 4px;
}

.task-item svg {
  width: 30px;
  height: 30px;
}

.task-item.open {
  border: 1px solid #b5cc8f;
  background: rgba(255,255,255,.2);
}

.task-item.active {
  border: 2px solid #dfe8cf;
  background: rgba(255,255,255,.35);
}

.tray {
  display: flex;
  align-items: center;
  margin-left: auto;
}

.tray-icon {
  width: 17px;
  height: 17px;
  margin-right: 7px;
}

.tray-icon.battery {
  margin: 0 4px 0 4px;
}

.tray-lang {
  width: 24px;
  margin-left: 9px;
  font-family: "Noto Sans", sans-serif;
  font-size: 10px;
  color: #fff;
}

.clock {
  display: flex;
  flex-direction: column;
  align-items: center;
  width: 72px;
  margin-left: 6px;
  padding-right: 10px;
  font-family: "Open Sans", sans-serif;
  font-size: 11.2px;
  line-height: 17px;
  color: #fff;
}
```
